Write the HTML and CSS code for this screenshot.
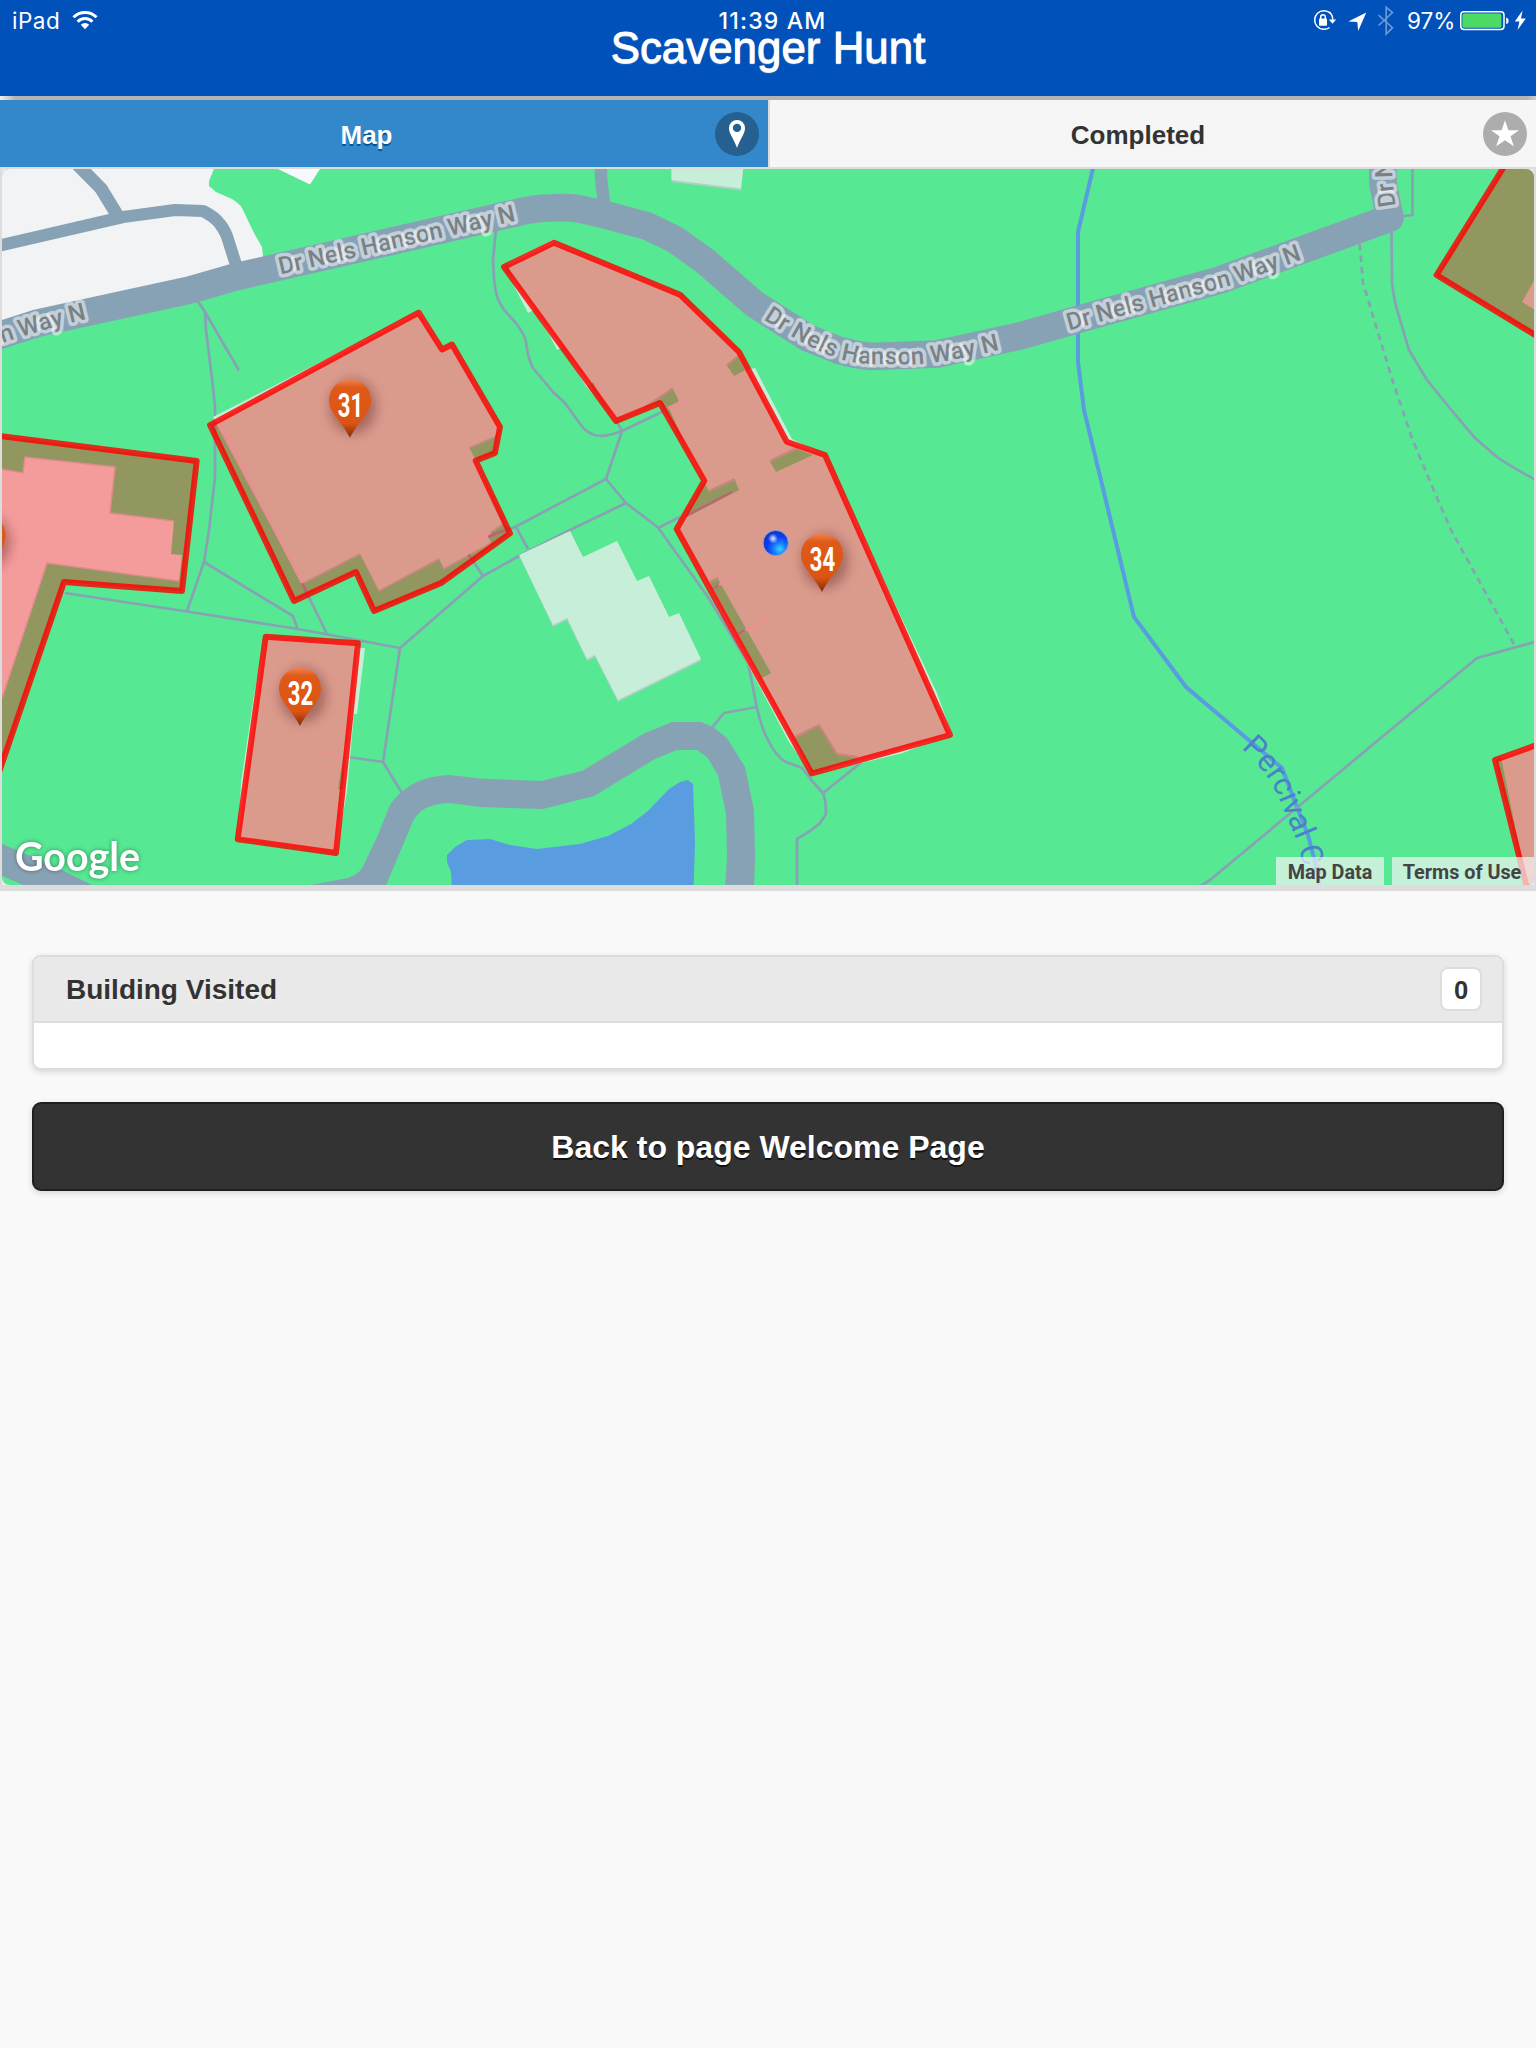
FILE: index.html
```html
<!DOCTYPE html>
<html lang="en">
<head>
<meta charset="utf-8">
<title>Scavenger Hunt</title>
<link rel="stylesheet" href="styles.css">
</head>
<body>
<header class="header">
  <h1 class="title">Scavenger Hunt</h1>
  <div class="status">
    <div class="status-left">
      <span class="carrier">iPad</span>
      <svg class="wifi" width="26" height="20" viewBox="0 0 26 20"><g fill="none" stroke="#fff" stroke-width="3"><path d="M1.5 7.2a16.3 16.3 0 0 1 23 0"/><path d="M5.6 11.7a10.4 10.4 0 0 1 14.8 0"/></g><path d="M13 19.3l-4.2-4.6a6 6 0 0 1 8.4 0z" fill="#fff"/></svg>
    </div>
    <span class="clock">11:39 AM</span>
    <div class="status-right">
      <svg width="97" height="32" viewBox="0 0 97 32">
        <path d="M20.300 9.200A9.300 9.300 0 1 0 19.500 23.500" fill="none" stroke="#fff" stroke-width="1.500"/>
        <path d="M19 7.800A9.300 9.300 0 0 1 22.700 15.500" fill="none" stroke="#fff" stroke-width="1.500"/>
        <path d="M18.900 15.500h7.200l-3.600 4.200z" fill="#fff"/>
        <rect x="9" y="14.500" width="8" height="7.200" rx=".8" fill="#fff"/>
        <path d="M10.700 15v-2a2.300 2.300 0 0 1 4.600 0v2" fill="none" stroke="#fff" stroke-width="1.500"/>
        <path d="M56.300 8.500L38.300 17.500l9 .6.900 9z" fill="#fff"/>
        <path d="M68.500 12.700l14 12.500-6.300 6.300V4.800l6.300 5.200-14 13" transform="translate(0 -1.500)" fill="none" stroke="#6799d8" stroke-width="1.700"/>
      </svg>
      <span class="percent">97%</span>
      <svg width="71" height="32" viewBox="0 0 71 32">
        <rect x="1.800" y="7.800" width="43.200" height="17.600" rx="3.200" fill="none" stroke="#fff" stroke-width="1.500"/>
        <rect x="3.400" y="9.400" width="39" height="14.400" rx="1.500" fill="#4cdb64"/>
        <path d="M47.200 13.400c3.200.6 3.200 6 0 6.600z" fill="#fff"/>
        <path d="M63.600 6.600L55.800 17.600h4.600l-1.800 8.400 8.200-11.600h-4.800z" fill="#fff"/>
      </svg>
    </div>
  </div>
</header>
<div class="header-edge"></div>
<nav class="tabs">
  <a class="tab tab-active"><span>Map</span>
    <svg class="tab-icon" width="44" height="44" viewBox="0 0 44 44"><circle cx="22" cy="22" r="22" fill="#256090"/><path fill="#fff" fill-rule="evenodd" d="M22 8a8 8 0 0 0-8 8c0 3 1.2 5.4 2.6 8.2C19 29 20.800 32 22 36c1.200-4 3-7 5.400-11.800C28.800 21.400 30 19 30 16a8 8 0 0 0-8-8zm0 3.700a4.200 4.200 0 1 1 0 8.400 4.200 4.200 0 0 1 0-8.400z"/></svg>
  </a>
  <a class="tab"><span>Completed</span>
    <svg class="tab-icon" width="44" height="44" viewBox="0 0 44 44"><circle cx="22" cy="22" r="22" fill="#adadad"/><path fill="#fff" d="M22 8.200l3.400 10H36l-8.500 6.100 3.300 10L22 28.200l-8.800 6.100 3.300-10L8 18.200h10.600z"/></svg>
  </a>
</nav>
<main>
<div class="map">
<svg class="map-canvas" width="1532" height="716" viewBox="2 169 1532 716">
  <defs>
    <linearGradient id="pinFill" x1="0" y1="0" x2="0" y2="1"><stop offset="0" stop-color="#f0824e"/><stop offset=".14" stop-color="#de5a18"/><stop offset=".75" stop-color="#dc5412"/><stop offset="1" stop-color="#7e2c06"/></linearGradient>
    <radialGradient id="dotFill" cx=".66" cy=".74" r=".7"><stop offset="0" stop-color="#35d4ff"/><stop offset=".35" stop-color="#1a7dff"/><stop offset=".7" stop-color="#0c3df2"/><stop offset="1" stop-color="#1238c8"/></radialGradient>
    <radialGradient id="dotShine"><stop offset="0" stop-color="#fff" stop-opacity=".9"/><stop offset="1" stop-color="#fff" stop-opacity="0"/></radialGradient>
    <filter id="pinShadow" x="-60%" y="-60%" width="220%" height="220%"><feGaussianBlur stdDeviation="6"/></filter>
    <path id="pin" d="M0-58.200C-12-58.200-21-48.500-21-37.500c0 12.500 12 20 21 37.500C9-17.500 21-25 21-37.500 21-48.500 12-58.200 0-58.200z"/>
    <path id="label1" d="M280.500 274.500L524 219"/>
    <path id="label2" d="M763 319Q800 343 826 354T880 364L910 364.500Q950 363 1010 347"/>
    <path id="label3" d="M1069 330.500L1154 307L1229 286L1312 256"/>
    <path id="label4" d="M1396 206Q1392 184 1392 166V60"/>
    <path id="label5" d="M-165 386L0 344Q40 330 87 319"/>
    <path id="label6" d="M1241 748Q1268 772 1279 798L1296 839L1304 868L1314 920"/>
  </defs>
  <rect x="0" y="160" width="1540" height="730" fill="#56e893"/>
  <path fill="#f1f3f5" d="M0 160H217L214 169L209 181V186L216 192L232 199Q240 204 242 208L254 233L262 247L264 265L190 282L0 335z"/>
  <path fill="#f8f9fb" d="M278 169L310 184.500L320 169z"/>
  <path fill="#599de0" d="M452 890L451 872L447 862V855L455 847L467 840L490 839L510 845L537 849L580 844L608 836L631 824L648 811L669 789L680 782L688 780L693 784L695 843L693.500 890z"/>

  <g class="shade">
    <path d="M671.500 162V182L741 190.500L744 162z"/>
    <path d="M519 555L570 531L583 559L617 543L637 583L649 578L669 619L679 615L701 661L618 702L595 657L587 661L567 620L553 627z"/>
    <path d="M213 419L420 313L442 351L452 346L500 429L495 438L469 449L476 463L503 525L487 536L491 544L444 570L439 560L379 592L360 555L302 585z"/>
  </g>

  <path class="river" d="M1095 160L1078 232V362L1084 410L1113 530L1134 617L1186 687L1251 742L1282 768L1297 807L1308 835L1317 870L1320 890"/>
  <g class="path">
    <path d="M197 300L205 312L239 370.500"/>
    <path d="M205 312L206 330L213 387L215 407V477L209 530L204 562L187 611"/>
    <path d="M204 562L293 616L298 630"/>
    <path d="M65 593L187 611.500L298 629L400 648L483 576L519 556L570 530L626 503"/>
    <path d="M302 583L327 634"/>
    <path d="M400 648L383 762L402 793"/>
    <path d="M383 762L320 753"/>
    <path d="M496 228L493 260L494 278Q495 291 498 299Q502 309 515 322Q524 333 526 342Q528 359 533 368L553 392L565 403L580 424Q588 435 600 436Q609 436 622 431L687 400"/>
    <path d="M622 431L606 479L513 528L470 541L467 552L483 576"/>
    <path d="M616 420L622 431"/>
    <path d="M516 527L528 549"/>
    <path d="M606 479L626 503L658 527.500L708 597L748 663L757 708Q762 729 767 738Q776 757 786 762L802 768L813 782L823 793Q826 800 826 814L820 823Q814 829 797 839V890"/>
    <path d="M658 528L680 517"/>
    <path d="M757 707L724 713L711 729"/>
    <path d="M823 793L862 762"/>
    <path d="M1412.500 160V215L1400 216.500"/>
    <path d="M1391.500 230L1392 283Q1394 300 1398 313L1409 350L1427 380Q1450 409 1475 438L1497 457Q1511 467 1538 481"/>
    <path d="M1538 641L1477 658L1299 806L1210 880L1196 889"/>
    <path stroke-dasharray="6.500 5" d="M1359.700 244L1363 283L1393 382L1412 438Q1432 487 1451 530L1515 646"/>
  </g>

  <g fill="none" stroke="#88a2b5" stroke-linejoin="round">
    <path stroke-width="13" d="M70 157L101 188.500L119 218"/>
    <path stroke-width="12.200" d="M0 245.500L123 217L175 210L203 211Q215 217 220 224Q226 232 228 239.500L237 268"/>
    <path stroke-width="12.500" d="M601 160V178L604.500 208"/>
    <path stroke-width="27.700" d="M-6 337L38 323L190 290L235 277L515 213Q535 208 551 208Q567 207 580 209L606 215L647 226L675 239.500L705 261L754.500 304L808 338L838 350Q855 355 871.500 356.500L937.500 354L1020 336L1076 320L1220 280L1302 250L1390 218L1383 184V160"/>
  </g>
  <path fill="#88a2b5" d="M0 843L60 869L98 888H30L0 875zM300 887L348 878Q362 873 365 862L378 835L389 807Q394 798 403 791Q420 776 450 775L480 778.500L541 781L582 771L643 734L672 722H701L713 727L727 738L745 767L754 810L755 857L754 890H725L727 857L726 814L718 775L707 757L697 750H677L655 759L594 796L543 809L480 807L450 803Q433 803 421 811L414 819L403 845L384 890z"/>

  <g class="building">
    <path d="M671.500 162V180L741 188.500L744 162z"/>
    <path d="M519 555L570 531L583 557L617 541L637 581L649 576L669 617L679 613L701 659L618 700L595 655L587 659L567 618L553 625z"/>
    <path d="M213 417L420 311L442 349L452 344L500 427L495 436L469 447L476 461L503 523L487 534L491 542L444 568L439 558L379 590L360 553L302 583z"/>
    <path d="M552 240L508 263L514 286L528 313L534 310L550 336L557 350L563 347L585 385L616 421L660 403L680 438L704 481L677 529L756 680L789 742L812 774L868 761.500L903 753L920 746L952 735L937 693L825 455L792 439L755 368L747 370L739 352L680 294.700L554 242z"/>
    <path d="M266 637L355 643L359 648L365 648L357 714L354 714L347 792L345 803L336 853L238 839L241 783L254 695z"/>
    <path d="M1540 270L1522 302L1540 313z"/>
    <path d="M1501 757L1540 742V900H1530z"/>
  </g>
  <path fill="#eee" d="M0 469L23 473L25 457L115 467L110 513L174 521L171 554L182 555L179 581L47 563L2 698L-5 720z"/>
  <path fill="none" stroke="#cfd6d8" stroke-width="1.500" d="M0 469L23 473L25 457L115 467L110 513L174 521M179 581L47 563L2 698"/>
  <g fill="#56e893">
    <path d="M727 366L738 357L745 370L734 376z"/>
    <path d="M770 462L797 449L813 455L776 472z"/>
    <path d="M645 408L673 389L679 401L669 408L683 440L678 437L660 403z"/>
    <path d="M704 481L709 492L735 480L739 490L685 518z"/>
    <path d="M593 382L613 417L608 415L588 387z"/>
    <path d="M710 583L718 579L771 673L762 678z"/>
    <path d="M795 738L819 726L837 755L858 758L812 774z"/>
    <path d="M345 747L338 789L343 790z"/>
  </g>
  <g fill="none" stroke="#aecbbf" stroke-width="2">
    <path d="M727 365L738 356M770 461L797 448M645 407L673 388M709 491L735 479M710 582L718 578M795 737L819 725L837 754L858 757"/>
  </g>
  <g fill="none" stroke="#dedddf" stroke-width="2.500">
    <path d="M222 427L302 583M491 533L473 541Q467 545 467 552M320 753L346 757M713 589L739 572M738 634L771 617M668 408L686 400M594 381L613 416"/>
  </g>
  <path fill="none" stroke="#8fa0b0" stroke-width="2.500" d="M686 516L732 492M488 537L505 530M713 589L719 585M738 634L745 630M303 585L308 596"/>

  <g class="zone">
    <path d="M-8 435L196.700 461L182 591L64 582L-8 793z"/>
    <path d="M418.700 312.700L442 349.500L452 344.500L500 427L495 453L475.700 460.700L510 533.300L441.700 582.700L374 611L356 572L294 601L210 425z"/>
    <path d="M265.700 636.700L358 643.300L336 853L237.700 839.300z"/>
    <path d="M554 242.700L504 267L616 421L660 403L680 438L704.300 480.700L676.700 529L811.700 773.500L950 735L825 455L786.700 441.700L739 352L680 294.700z"/>
    <path d="M1510 157L1436.600 275L1545 341V157z"/>
    <path d="M1545 742L1495 760L1530 900H1545z"/>
  </g>

  <g class="road-label">
    <text><textPath href="#label1" textLength="242">Dr Nels Hanson Way N</textPath></text>
    <text><textPath href="#label2" textLength="249">Dr Nels Hanson Way N</textPath></text>
    <text><textPath href="#label3" textLength="244">Dr Nels Hanson Way N</textPath></text>
    <text letter-spacing="-.6"><textPath href="#label4">Dr Nels</textPath></text>
    <text text-anchor="end"><textPath href="#label5" startOffset="100%">Dr Nels Hanson Way N</textPath></text>
  </g>
  <text class="river-label"><textPath href="#label6">Percival Cr</textPath></text>

  <g class="pin">
    <g transform="translate(350 437.700)"><ellipse cx="3" cy="-31" rx="23" ry="27" class="pin-shadow"/><use href="#pin"/><text transform="translate(.5 -21) scale(.67 1)">31</text></g>
    <g transform="translate(300 726)"><ellipse cx="3" cy="-31" rx="23" ry="27" class="pin-shadow"/><use href="#pin"/><text transform="translate(.5 -21) scale(.67 1)">32</text></g>
    <g transform="translate(822 592)"><ellipse cx="3" cy="-31" rx="23" ry="27" class="pin-shadow"/><use href="#pin"/><text transform="translate(.5 -21) scale(.67 1)">34</text></g>
    <g transform="translate(-15.500 573)"><ellipse cx="3" cy="-31" rx="23" ry="27" class="pin-shadow"/><use href="#pin"/></g>
  </g>
  <circle cx="775.700" cy="543" r="12.600" fill="url(#dotFill)" stroke="#8aa0d8" stroke-width="1"/>
  <circle cx="773" cy="538.500" r="5" fill="url(#dotShine)"/>
  <text class="logo" x="15" y="870.500" textLength="125" lengthAdjust="spacingAndGlyphs">Google</text>
</svg>
<div class="map-links"><a class="map-link">Map Data</a><a class="map-link map-link-terms">Terms of Use</a></div>
</div>
<section class="panel">
  <div class="panel-head"><h2 class="panel-title">Building Visited</h2><span class="count">0</span></div>
  <div class="panel-body"></div>
</section>
<a class="button">Back to page Welcome Page</a>
</main>
</body>
</html>
```
FILE: styles.css
```css
* { box-sizing: border-box; }
body {
  margin: 0;
  min-height: 2048px;
  background: #f9f9f9;
  color: #333;
  font-family: "Liberation Sans", Arial, sans-serif;
}
.header {
  position: relative;
  height: 96px;
  background: #0051ba;
  color: #fff;
}
.title {
  margin: 0;
  line-height: 95px;
  font-size: 43.900px;
  font-weight: 400;
  text-align: center;
  -webkit-text-stroke: .8px #fff;
  text-shadow: 0 1px 1px #ddd;
}
.status {
  position: absolute;
  inset: 0 0 auto 0;
  height: 42px;
  display: grid;
  grid-template-columns: 1fr auto 1fr;
  align-items: center;
  padding: 0 6px 0 12px;
  font: 400 22.500px/42px Inter, sans-serif;
}
.status-left { display: flex; align-items: center; gap: 12px; }
.carrier { letter-spacing: .5px; }
.clock { font-weight: 500; font-size: 23px; letter-spacing: 1.200px; margin-left: 3px; }
.status-right { display: flex; align-items: center; justify-content: flex-end; }
.status-right svg { margin-top: -2px; }
.wifi { margin-top: -2px; }
.percent { width: 46px; margin: 0 6px 0 0; }
.header-edge {
  height: 4px;
  background: linear-gradient(to right, #eee, #b3b3b3 16px, #b3b3b3 1526px, #ccc);
}
.tabs {
  display: grid;
  grid-template-columns: 768px 768px;
  height: 67px;
}
.tab {
  display: grid;
  grid-template-columns: 1fr 44px;
  align-items: center;
  padding: 1px 9px 0 0;
  background: #f6f6f6;
  border-left: 2px solid #ddd;
  font-size: 26px;
  font-weight: 700;
  text-align: center;
  text-shadow: 0 2px 0 #f3f3f3;
}
.tab span { padding: 3px 0 0 23px; }
.tab-active {
  border-left: 0;
  background: #3388cc;
  color: #fff;
  text-shadow: 0 2px 0 #005599;
}
.tab-active span { padding-left: 18px; }
.map {
  position: relative;
  border: 2px solid #ddd;
  border-bottom-width: 6px;
  background: #e9e9e9;
}
.map-canvas { display: block; border-radius: 8px; }
.shade { fill: #aed0c1; }
.building { fill: #c7eed9; }
.river { fill: none; stroke: #599de0; stroke-width: 4; }
.path { fill: none; stroke: #88a2b5; stroke-width: 2.700; stroke-linejoin: round; }
.zone {
  fill: rgba(255, 0, 0, .35);
  stroke: rgba(255, 0, 0, .82);
  stroke-width: 5.900;
  stroke-linejoin: round;
}
.road-label {
  font: 500 24px Roboto, sans-serif;
  fill: #7a8185;
  stroke: rgba(255, 255, 255, .5);
  stroke-width: 7;
  stroke-linejoin: round;
  paint-order: stroke;
}
.river-label { font: 400 31px Roboto, sans-serif; fill: #4b80cc; }
.pin use { fill: url(#pinFill); }
.pin-shadow { fill: #501414; opacity: .38; filter: url(#pinShadow); }
.pin text {
  font: 700 33px Roboto, sans-serif;
  fill: #fff;
  text-anchor: middle;
}
.logo {
  font: 700 40px Lato, sans-serif;
  fill: #fff;
  filter: drop-shadow(0 0 2px rgba(0, 0, 0, .4));
}
.map-links {
  position: absolute;
  right: 0;
  bottom: 0;
  display: flex;
  gap: 8px;
}
.map-link {
  width: 108px;
  height: 28px;
  background: rgba(245, 245, 245, .7);
  color: #444;
  font: 700 19.800px/31px Roboto, sans-serif;
  text-align: center;
  white-space: nowrap;
}
.map-link-terms { width: 142px; padding-right: 2px; border-bottom-right-radius: 8px; }
.panel {
  margin: 64px 32px 0;
  border: 2px solid #ddd;
  border-radius: 9px;
  background: #fff;
  box-shadow: 0 2px 6px rgba(0, 0, 0, .15);
  overflow: hidden;
}
.panel-head {
  display: flex;
  align-items: center;
  justify-content: space-between;
  height: 66px;
  padding: 0 20px 0 32px;
  background: #e9e9e9;
  border-bottom: 2px solid #ddd;
}
.panel-title {
  margin: 0;
  padding-top: 2px;
  font-size: 28px;
  font-weight: 700;
  text-shadow: 0 2px 0 #eee;
}
.count {
  width: 42px;
  height: 44px;
  border: 2px solid #ddd;
  border-radius: 8px;
  background: #fff;
  font-size: 25.600px;
  font-weight: 700;
  line-height: 42px;
  text-align: center;
}
.panel-body { height: 45px; }
.button {
  display: block;
  height: 89px;
  margin: 32px 32px 0;
  border: 2px solid #1f1f1f;
  border-radius: 9px;
  background: #333;
  box-shadow: 0 2px 6px rgba(0, 0, 0, .15);
  color: #fff;
  font-size: 32px;
  font-weight: 700;
  line-height: 86px;
  text-align: center;
  text-shadow: 0 2px 0 #111;
}
```
